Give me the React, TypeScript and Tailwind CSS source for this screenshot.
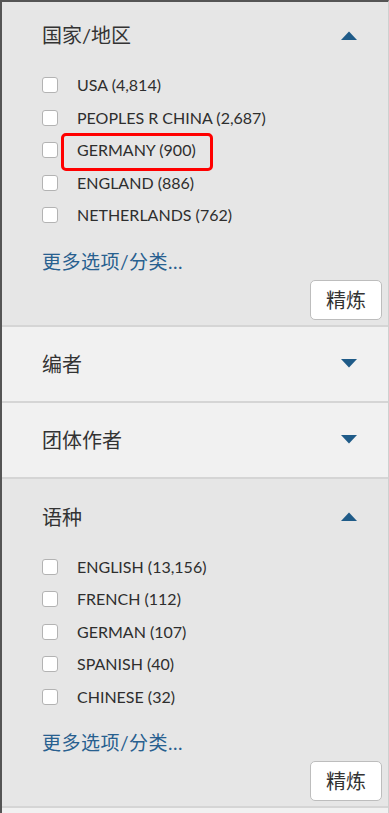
import React from 'react';

type Facet = { label: string; count: string };

const COUNTRIES: Facet[] = [
  { label: 'USA', count: '4,814' },
  { label: 'PEOPLES R CHINA', count: '2,687' },
  { label: 'GERMANY', count: '900' },
  { label: 'ENGLAND', count: '886' },
  { label: 'NETHERLANDS', count: '762' },
];

const LANGUAGES: Facet[] = [
  { label: 'ENGLISH', count: '13,156' },
  { label: 'FRENCH', count: '112' },
  { label: 'GERMAN', count: '107' },
  { label: 'SPANISH', count: '40' },
  { label: 'CHINESE', count: '32' },
];

const Caret = ({ up }: { up?: boolean }) => (
  <svg width="16" height="9" viewBox="0 0 16 9">
    <path d={up ? 'M0 9 L8 0.5 L16 9 Z' : 'M0 0 L8 8.5 L16 0 Z'} fill="#1f5b88" />
  </svg>
);

const ExpandedSection = ({ title, items, top }: { title: string; items: Facet[]; top: string }) => (
  <div className={`relative flex flex-col pl-10 pr-[6px] pb-[5px] bg-[#e6e6e6] border-b-2 border-[#d5d5d5] ${top}`}>
    <div className="flex items-center justify-between h-7 pr-[25px]">
      <span className="text-[20px] text-[#333]">{title}</span>
      <Caret up />
    </div>
    <div className="mt-5">
      {items.map((it) => (
        <div key={it.label} className="flex items-center h-[32.5px]">
          <span className="w-4 h-4 rounded-[3px] border border-[#b3b3b3] bg-white" />
          <span className="ml-[19px] text-[16px] text-[#2e2e2e]">
            {it.label} ({it.count})
          </span>
        </div>
      ))}
    </div>
    <a className="mt-4 h-7 leading-7 text-[19px] tracking-[0.5px] text-[#28608f]">更多选项/分类...</a>
    <button className="mt-1 self-end w-[72px] h-10 rounded-[5px] border border-[#bdbdbd] bg-white text-[20px] text-[#333]">
      精炼
    </button>
  </div>
);

const CollapsedSection = ({ title }: { title: string }) => (
  <div className="flex items-center justify-between h-[76px] pl-10 pr-[31px] bg-[#f1f1f1] border-b-2 border-[#d5d5d5]">
    <span className="text-[20px] text-[#333]">{title}</span>
    <Caret />
  </div>
);

export default function App() {
  return (
    <div
      className="w-[389px] h-[813px] overflow-hidden bg-[#f1f1f1] border-l-2 border-t-2 border-l-[#555] border-t-[#555] border-r border-r-[#cfcfcf]"
      style={{ fontFamily: 'Lato, "Noto Sans CJK SC", sans-serif' }}
    >
      <div className="relative">
        <ExpandedSection title="国家/地区" items={COUNTRIES} top="pt-[19px]" />
        {/* annotation box */}
        <div className="absolute left-[59px] top-[131px] w-[152px] h-[38px] border-[3px] border-[#f00] rounded-[5px]" />
      </div>
      <CollapsedSection title="编者" />
      <CollapsedSection title="团体作者" />
      <ExpandedSection title="语种" items={LANGUAGES} top="pt-6" />
    </div>
  );
}
